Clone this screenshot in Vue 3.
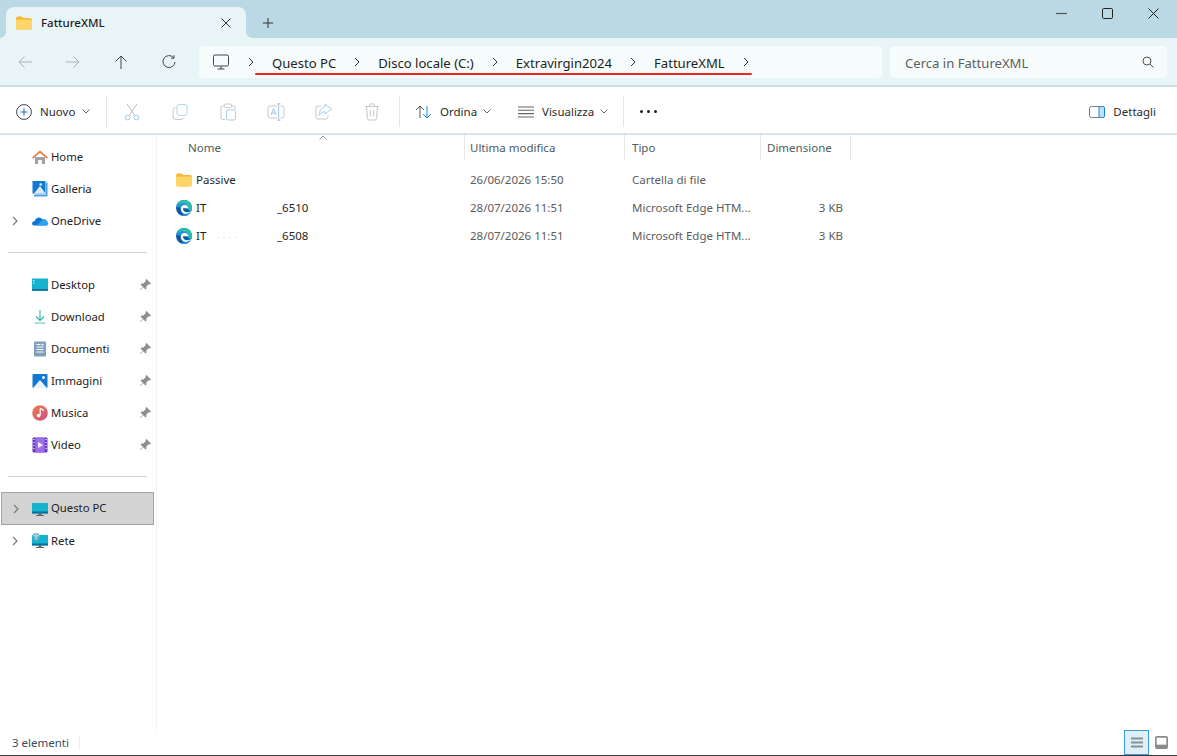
<script setup>
// Windows 11 File Explorer window, folder view. Sidebar icons are small svg strings.
const folder = '<path d="M0 3.5Q0 1.5 2 1.5H5.5L7.5 3H14Q16 3 16 5V12.5Q16 14.5 14 14.5H2Q0 14.5 0 12.5Z" fill="#f7b733"/><path d="M0 6Q0 4.6 2 4.6H14Q16 4.6 16 6V12.5Q16 14.5 14 14.5H2Q0 14.5 0 12.5Z" fill="#fdd569"/>'
const edge = '<circle cx="8" cy="8" r="8" fill="#0d5aa6"/><path d="M.1 7.4C.6 3 4 0 8 0C12.6 0 16 3.6 16 8C16 9.6 15.6 10.6 14.6 11.2L9 7C6 5 2.6 5.4 .1 7.4Z" fill="#2bbfb0"/><path d="M.1 7.4C1 4.6 4 3 7.4 3.4C10.6 3.8 12.4 5.800 12.2 8H6.6C6.2 10.4 8.4 12.2 11 12.200C12.600 12.200 13.800 11.800 15 11C13.800 14 11.200 16 8 16C7.400 16 6.800 15.900 6.200 15.800C9 15 4 10 5 8C4 7 2 7 .1 7.400Z" fill="#2a8fd6"/><path d="M4.800 9C4.800 6.400 6.600 5 8.600 5C10.800 5 12.200 6.400 12.200 8.200H7C6.800 10.600 8.800 12.300 11 12.300C12.400 12.300 13.800 11.900 15 11C14 12.800 12.200 13.800 10.200 13.800C7 13.800 4.800 11.800 4.800 9Z" fill="#fff"/>'
const pc = '<rect x="0" y="2" width="16" height="10.5" rx=".8" fill="#14b3d0"/><rect x="0" y="10.5" width="16" height="2" fill="#0c6f95"/><rect x="6.5" y="12.5" width="3" height="1.8" fill="#4f6673"/><rect x="4" y="14" width="8" height="1" fill="#4f6673"/>'
const picture = '<rect x=".5" y="1" width="15" height="14" rx="1" fill="#1178d4"/><path d="M1 15L8 7L15 15Z" fill="#e8f3fb"/><circle cx="11.5" cy="4.5" r="1.5" fill="#fff"/>'

const quick = [
  { label: 'Home', icon: '<path d="M3 8H13V15H9.8V11H6.2V15H3Z" fill="#a2a2a2"/><path d="M0 8.6L8 1.5L16 8.6L14.8 9.6L8 3.8L1.2 9.6Z" fill="#e8743b"/>' },
  { label: 'Galleria', icon: '<rect x=".5" y="0" width="13" height="12.5" fill="#1178d4"/><path d="M2 12.5L8 5L13.5 12.5Z" fill="#dbeaf6"/><circle cx="8.7" cy="3.4" r="1.2" fill="#fff"/><path d="M14 1.5H15.5V15.5H2V14H14Z" fill="#4c9edc"/><rect x="2" y="12.5" width="12" height="1.5" fill="#a9cde9"/>' },
  { label: 'OneDrive', arrow: true, icon: '<path d="M1.500 12.500Q-.5 12 .3 9.600Q1 8 2.600 8.300Q3.400 5 6.600 4.600Q9 4.400 10.400 6.400Q14 5.800 15 8.600Q16.400 9.400 16 11Q15.400 12.500 14 12.500Z" fill="#0f78d4"/><path d="M5 12.500L10.400 6.400Q14 5.800 15 8.600Q16.400 9.400 16 11Q15.400 12.500 14 12.500Z" fill="#2ea2ec"/>' },
]
const pinned = [
  { label: 'Desktop', icon: '<rect x="0" y="1.5" width="16" height="12" rx=".6" fill="#14b3d0"/><rect x="0" y="12" width="16" height="1.8" fill="#0c6f95"/><rect x="1.2" y="3" width="1.2" height="1.2" fill="#e3f7fb"/><rect x="1.2" y="5.4" width="1.2" height="1.2" fill="#e3f7fb"/>' },
  { label: 'Download', icon: '<path d="M8 1V11M4 7.5L8 11.5L12 7.5" fill="none" stroke="#35b4a0" stroke-width="1.1"/><rect x="2.5" y="13.5" width="11" height="1.2" fill="#6fd0c0"/>' },
  { label: 'Documenti', icon: '<rect x="2" y="0.5" width="12" height="15" rx=".8" fill="#7f9fbd"/><path d="M4.5 3.5H8.5M4.5 6H11.5M4.5 8.5H11.5M4.5 11H11.5" stroke="#fff" stroke-width="1.2"/><rect x="9.5" y="2.8" width="2" height="1.6" fill="#fff"/>' },
  { label: 'Immagini', icon: picture },
  { label: 'Musica', icon: '<defs><linearGradient id="mus" x1="0" y1="0" x2="1" y2="1"><stop offset="0" stop-color="#ee8047"/><stop offset="1" stop-color="#cc4c8a"/></linearGradient></defs><circle cx="8" cy="8" r="7.8" fill="url(#mus)"/><path d="M8.2 3.5V10.2" stroke="#fff" stroke-width="1.2"/><circle cx="6.600" cy="10.600" r="1.800" fill="#fff"/><path d="M8.200 3.500Q11 3.800 11.400 6" fill="none" stroke="#fff" stroke-width="1.2"/>' },
  { label: 'Video', icon: '<rect x=".5" y=".5" width="15" height="15" rx="1" fill="#6a3cc4"/><rect x="3.4" y=".5" width="9.2" height="15" fill="#9c6fe4"/><path d="M6 5L11 8L6 11Z" fill="#f5efff"/><path d="M1.2 2.5H2.7M1.2 5.5H2.7M1.2 8.5H2.7M1.2 11.5H2.7M13.3 2.5H14.8M13.3 5.5H14.8M13.3 8.5H14.8M13.3 11.5H14.8" stroke="#d9c8f7" stroke-width="1"/>' },
]
const places = [
  { label: 'Questo PC', arrow: true, selected: true, icon: pc },
  { label: 'Rete', arrow: true, icon: pc + '<circle cx="4.2" cy="3.6" r="3.6" fill="#5fb2c9"/><path d="M1.4 2.2Q4 4.4 7 2.2M4.2 0V7.2" stroke="#e4f2f6" stroke-width=".7" fill="none"/>' },
]
const crumbs = ['Questo PC', 'Disco locale (C:)', 'Extravirgin2024', 'FattureXML']
const files = [
  { first: 'Passive', date: '26/06/2026 15:50', type: 'Cartella di file', size: '', icon: folder },
  { first: 'IT', last: '_6510', date: '28/07/2026 11:51', type: 'Microsoft Edge HTM...', size: '3 KB', icon: edge },
  { first: 'IT', last: '_6508', smudge: true, date: '28/07/2026 11:51', type: 'Microsoft Edge HTM...', size: '3 KB', icon: edge },
]
</script>

<template>
  <div class="win">
    <header class="titlebar">
      <div class="tab">
        <svg class="ico16" viewBox="0 0 16 16" v-html="folder"></svg>
        <span class="tab-title">FattureXML</span>
        <svg class="tab-close" viewBox="0 0 10 10"><path d="M.5 .5L9.5 9.5M9.5 .5L.5 9.5" stroke="#333" fill="none" /></svg>
      </div>
      <svg class="tab-plus" viewBox="0 0 10 10"><path d="M5 0V10M0 5H10" stroke="#333" fill="none" /></svg>
      <div class="winbtns">
        <svg viewBox="0 0 11 11"><path d="M0 5.5H11" stroke="#555" stroke-width="1.2" /></svg>
        <svg viewBox="0 0 11 11"><rect x=".5" y=".5" width="10" height="10" rx="1.2" fill="none" stroke="#222" /></svg>
        <svg viewBox="0 0 11 11"><path d="M.5 .5L10.5 10.5M10.5 .5L.5 10.5" stroke="#222" fill="none" /></svg>
      </div>
    </header>

    <nav class="navbar">
      <div class="navbtns">
        <svg viewBox="0 0 14 14"><path d="M14 7H1M6.5 1.5L1 7L6.5 12.5" class="line off" /></svg>
        <svg viewBox="0 0 14 14"><path d="M0 7H13M7.5 1.5L13 7L7.5 12.5" class="line off" /></svg>
        <svg viewBox="0 0 14 14"><path d="M7 14V1M1.5 6.5L7 1L12.5 6.5" class="line" /></svg>
        <svg viewBox="0 0 14 14"><path d="M11.5 2.6A6 6 0 1 0 13 7M12 .2V3.2H9" class="line" /></svg>
      </div>
      <div class="address">
        <svg class="pc-ico" viewBox="0 0 16 16"><rect x=".5" y="1" width="15" height="11" rx="1.5" fill="none" stroke="#444" /><path d="M8 12V15M4.5 15H11.5" stroke="#444" fill="none" /></svg>
        <svg class="chev" viewBox="0 0 6 10"><path d="M1 1L5 5L1 9" fill="none" stroke="#333" /></svg>
        <template v-for="c in crumbs" :key="c">
          <span class="crumb">{{ c }}</span>
          <svg class="chev" viewBox="0 0 6 10"><path d="M1 1L5 5L1 9" fill="none" stroke="#333" /></svg>
        </template>
        <div class="redline"></div>
      </div>
      <div class="search">
        <span>Cerca in FattureXML</span>
        <svg viewBox="0 0 12 12"><circle cx="5" cy="5" r="4" fill="none" stroke="#555" /><path d="M8 8L11.5 11.5" stroke="#555" /></svg>
      </div>
    </nav>

    <div class="cmdbar">
      <div class="cmd new">
        <svg class="ico16" viewBox="0 0 16 16"><circle cx="8" cy="8" r="7.4" fill="none" stroke="#444" /><path d="M8 4.5V11.5M4.5 8H11.5" stroke="#1a73c7" stroke-width="1.1" /></svg>
        <span>Nuovo</span>
        <svg class="caret" viewBox="0 0 8 5"><path d="M.5 .5L4 4L7.5 .5" fill="none" stroke="#666" /></svg>
      </div>
      <i class="vsep"></i>
      <div class="greyed">
        <svg viewBox="0 0 16 18"><path d="M3 1L10.5 12M13 1L5.5 12" stroke="#bdbdbd" fill="none" /><circle cx="3.7" cy="14.5" r="2.4" fill="none" stroke="#9cc6e8" /><circle cx="12.3" cy="14.5" r="2.4" fill="none" stroke="#9cc6e8" /></svg>
        <svg viewBox="0 0 16 18"><rect x="5" y="1.5" width="10" height="11" rx="2.2" fill="none" stroke="#b5d2ea" /><path d="M3.5 4.5Q1 5 1 7.5V13Q1 16.5 4.5 16.5H9Q11 16.5 12 14.5" fill="none" stroke="#c6c6c6" /></svg>
        <svg viewBox="0 0 16 18"><path d="M4 3H2Q1 3 1 4.5V15Q1 16.5 2.5 16.5H5M12 3H14Q15 3 15 4.5V6" fill="none" stroke="#c6c6c6" /><rect x="4.5" y="1" width="7" height="3.5" rx="1" fill="none" stroke="#c6c6c6" /><rect x="6.5" y="7" width="9" height="10" rx="1.5" fill="none" stroke="#a7cdea" /></svg>
        <svg viewBox="0 0 18 18"><path d="M10 3H3Q1 3 1 5V13Q1 15 3 15H10M13.5 3H15Q17 3 17 5V13Q17 15 15 15H13.5" fill="none" stroke="#c6c6c6" /><path d="M11.7 .8V17.2M10 .8H13.5M10 17.2H13.5" stroke="#9cc6e8" fill="none" /><path d="M4 12L6.5 5.5L9 12M4.9 10H8.1" stroke="#9cc6e8" fill="none" /></svg>
        <svg viewBox="0 0 18 18"><path d="M6 3H3Q1 3 1 5V14Q1 16 3 16H11Q13 16 13 14V12.5" fill="none" stroke="#c6c6c6" /><path d="M10 3V1L16.5 6L10 11V8.6Q6 8.4 4 12.5Q4.5 5 10 3.6Z" fill="none" stroke="#a7cdea" /></svg>
        <svg viewBox="0 0 16 18"><path d="M1 3.5H15M5.5 3.5V2Q5.5 1 6.5 1H9.5Q10.5 1 10.5 2V3.5M2.5 3.5L3.5 15.5Q3.6 17 5 17H11Q12.4 17 12.5 15.5L13.5 3.5M6.3 7V13.5M9.7 7V13.5" fill="none" stroke="#c6c6c6" /></svg>
      </div>
      <i class="vsep"></i>
      <div class="cmd sort">
        <svg viewBox="0 0 17 14"><path d="M5 13V1M1 5L5 1L9 5" fill="none" stroke="#555" /><path d="M12 1V13M8 9L12 13L16 9" fill="none" stroke="#1a8ae0" /></svg>
        <span>Ordina</span>
        <svg class="caret" viewBox="0 0 8 5"><path d="M.5 .5L4 4L7.5 .5" fill="none" stroke="#666" /></svg>
      </div>
      <div class="cmd view">
        <svg viewBox="0 0 16 12"><path d="M0 1H16M0 4.3H16M0 7.6H16M0 11H16" stroke="#666" stroke-width="1.1" /></svg>
        <span>Visualizza</span>
        <svg class="caret" viewBox="0 0 8 5"><path d="M.5 .5L4 4L7.5 .5" fill="none" stroke="#666" /></svg>
      </div>
      <i class="vsep"></i>
      <div class="dots"><b></b><b></b><b></b></div>
      <div class="cmd details">
        <svg viewBox="0 0 16 12"><rect x=".5" y=".5" width="15" height="11" rx="2" fill="none" stroke="#7c7c7c" /><rect x="10" y=".5" width="5.5" height="11" rx="1.5" fill="#bfe0f7" stroke="#1a8ae0" /></svg>
        <span>Dettagli</span>
      </div>
    </div>

    <div class="main">
      <aside class="sidebar">
        <div v-for="n in quick" :key="n.label" class="nav-row">
          <svg v-if="n.arrow" class="nav-arrow" viewBox="0 0 6 10"><path d="M1 1L5 5L1 9" fill="none" stroke="#777" stroke-width="1.1" /></svg>
          <svg class="ico16" viewBox="0 0 16 16" v-html="n.icon"></svg>
          <span>{{ n.label }}</span>
        </div>
        <hr class="nav-sep" />
        <div v-for="n in pinned" :key="n.label" class="nav-row">
          <svg class="ico16" viewBox="0 0 16 16" v-html="n.icon"></svg>
          <span>{{ n.label }}</span>
          <svg class="pin" viewBox="0 0 12 12"><path d="M7 0L12 5L11 6L9.5 5.8L7 8.3L7 10.5L6 11.5L.5 6L1.5 5L3.7 5L6.2 2.500L6 1Z" fill="#8f8f8f" /><path d="M3 9L.5 11.5" stroke="#8f8f8f" /></svg>
        </div>
        <hr class="nav-sep" />
        <div v-for="n in places" :key="n.label" class="nav-row" :class="{ selected: n.selected }">
          <svg class="nav-arrow" viewBox="0 0 6 10"><path d="M1 1L5 5L1 9" fill="none" stroke="#777" stroke-width="1.1" /></svg>
          <svg class="ico16" viewBox="0 0 16 16" v-html="n.icon"></svg>
          <span>{{ n.label }}</span>
        </div>
      </aside>

      <section class="list">
        <div class="list-head">
          <svg class="sort-caret" viewBox="0 0 8 5"><path d="M.5 4.5L4 1L7.5 4.5" fill="none" stroke="#999" /></svg>
          <div class="c-name">Nome</div>
          <div class="c-date">Ultima modifica</div>
          <div class="c-type">Tipo</div>
          <div class="c-size">Dimensione</div>
        </div>
        <div v-for="f in files" :key="f.first + f.last" class="list-row">
          <div class="r-name">
            <svg class="ico16" viewBox="0 0 16 16" v-html="f.icon"></svg>
            <span class="fn">{{ f.first }}</span>
            <i v-if="f.smudge" class="smudge"></i>
            <span v-if="f.last" class="fn-last">{{ f.last }}</span>
          </div>
          <div class="r-date">{{ f.date }}</div>
          <div class="r-type">{{ f.type }}</div>
          <div class="r-size">{{ f.size }}</div>
        </div>
      </section>
    </div>

    <footer class="status">
      <span>3 elementi</span>
      <i class="status-sep"></i>
      <div class="viewbtn active">
        <svg viewBox="0 0 12 11"><path d="M0 1.5H12M0 5.5H12M0 9.5H12" stroke="#8a8f94" stroke-width="2" /></svg>
      </div>
      <div class="viewbtn">
        <svg viewBox="0 0 12 12"><rect x=".75" y=".75" width="10.5" height="10.5" rx="1" fill="none" stroke="#8a8a8a" stroke-width="1.5" /><rect x="1" y="8" width="10" height="3.5" fill="#8a8a8a" /></svg>
      </div>
    </footer>
  </div>
</template>

<style>
html,
body {
  margin: 0;
  background: #fff;
}
</style>

<style scoped>
.win {
  width: 1177px;
  height: 756px;
  display: flex;
  flex-direction: column;
  overflow: hidden;
  font-family: "Noto Sans", "Open Sans", sans-serif;
  font-size: 11.5px;
  color: #1f1f1f;
  background: #fff;
}
.ico16 {
  width: 16px;
  height: 16px;
  flex: none;
}

.titlebar {
  height: 38px;
  flex: none;
  display: flex;
  align-items: flex-end;
  background: #bbd9e5;
  padding-left: 6px;
}
.tab {
  position: relative;
  width: 240px;
  height: 31px;
  box-sizing: border-box;
  padding: 0 15px 0 10px;
  display: flex;
  align-items: center;
  background: #e9f4f7;
  border-radius: 8px 8px 0 0;
}
.tab::before,
.tab::after {
  content: "";
  position: absolute;
  bottom: 0;
  width: 6px;
  height: 6px;
}
.tab::before {
  left: -6px;
  background: radial-gradient(circle at 0 0, #bbd9e5 5.5px, #e9f4f7 6px);
}
.tab::after {
  right: -6px;
  background: radial-gradient(circle at 100% 0, #bbd9e5 5.5px, #e9f4f7 6px);
}
.tab-title {
  margin-left: 9px;
  flex: 1;
  font-size: 11.5px;
  font-weight: 500;
}
.tab-close {
  width: 10px;
  height: 10px;
}
.tab-plus {
  width: 10px;
  height: 10px;
  margin: 0 0 10px 17px;
}
.winbtns {
  margin-left: auto;
  align-self: flex-start;
  display: flex;
  gap: 35px;
  padding: 8px 18px 0 0;
}
.winbtns svg {
  width: 11px;
  height: 11px;
}

.navbar {
  height: 49px;
  flex: none;
  box-sizing: border-box;
  display: flex;
  align-items: flex-start;
  padding: 8px 10px 0 0;
  background: #e9f4f7;
  border-bottom: 2px solid #c6dde6;
}
.navbtns {
  width: 199px;
  height: 32px;
  flex: none;
  box-sizing: border-box;
  padding-left: 18px;
  display: flex;
  align-items: center;
  gap: 34px;
}
.navbtns svg {
  width: 14px;
  height: 14px;
}
.line {
  fill: none;
  stroke: #444;
}
.line.off {
  stroke: #a9b4b9;
}
.address {
  position: relative;
  width: 683px;
  height: 32px;
  flex: none;
  box-sizing: border-box;
  padding-left: 14px;
  display: flex;
  align-items: center;
  gap: 18px;
  background: #f6fbfc;
  border-radius: 4px;
  font-size: 13.1px;
}
.pc-ico {
  width: 16px;
  height: 16px;
  margin-right: 1px;
}
.chev {
  width: 6px;
  height: 10px;
  flex: none;
}
.crumb {
  white-space: nowrap;
  padding-top: 1px;
}
.redline {
  position: absolute;
  left: 56px;
  top: 27px;
  width: 497px;
  height: 2px;
  border-radius: 1px;
  background: #ea2a22;
}
.search {
  width: 277px;
  height: 32px;
  flex: none;
  margin-left: 8px;
  box-sizing: border-box;
  padding: 0 13px 0 15px;
  display: flex;
  align-items: center;
  justify-content: space-between;
  background: #f6fbfc;
  border-radius: 4px;
  font-size: 13.1px;
  color: #5d5d5d;
}
.search span {
  padding-top: 1px;
}
.search svg {
  width: 12px;
  height: 12px;
}

.cmdbar {
  height: 48px;
  flex: none;
  box-sizing: border-box;
  padding-top: 3px;
  display: flex;
  align-items: center;
  background: #fff;
  border-bottom: 2px solid #d8e5eb;
}
.cmd {
  display: flex;
  align-items: center;
  color: #2b2b2b;
}
.caret {
  width: 8px;
  height: 5px;
}
.vsep {
  width: 1px;
  height: 31px;
  flex: none;
  background: #e4e4e4;
}
.new {
  width: 106px;
  flex: none;
  box-sizing: border-box;
  padding-left: 16px;
}
.new span {
  margin: 0 7px 0 8px;
}
.greyed {
  width: 292px;
  flex: none;
  box-sizing: border-box;
  padding-left: 1px;
  display: grid;
  grid-template-columns: repeat(6, 48px);
  justify-items: center;
  align-items: center;
}
.greyed svg {
  width: 18px;
  height: 18px;
}
.sort {
  width: 103px;
  flex: none;
  box-sizing: border-box;
  padding-left: 15px;
}
.sort svg:first-child {
  width: 17px;
  height: 14px;
}
.sort span {
  margin: 0 6px 0 8px;
}
.view {
  width: 120px;
  flex: none;
  box-sizing: border-box;
  padding-left: 15px;
}
.view svg:first-child {
  width: 16px;
  height: 12px;
}
.view span {
  margin: 0 6px 0 8px;
}
.dots {
  margin-left: 16px;
  display: flex;
  gap: 4px;
}
.dots b {
  width: 3px;
  height: 3px;
  border-radius: 50%;
  background: #222;
}
.details {
  margin-left: auto;
  padding-right: 21px;
}
.details svg {
  width: 16px;
  height: 12px;
  margin-right: 8px;
}

.main {
  flex: 1;
  min-height: 0;
  display: flex;
}
.sidebar {
  width: 157px;
  flex: none;
  box-sizing: border-box;
  padding-top: 6px;
  border-right: 1px solid #f3f3f3;
}
.nav-row {
  position: relative;
  height: 32px;
  box-sizing: border-box;
  padding-left: 32px;
  display: flex;
  align-items: center;
  gap: 3px;
  color: #222;
  font-size: 11.3px;
}
.nav-row span {
  margin-bottom: 2px;
}
.nav-row.selected {
  margin: -1px 2px 0 1px;
  height: 33px;
  padding-left: 30px;
  background: #d3d3d3;
  border: 1px solid #a3a3a3;
}
.nav-row.selected .nav-arrow {
  left: 11px;
}
.nav-arrow {
  position: absolute;
  left: 12px;
  top: 11px;
  width: 6px;
  height: 10px;
}
.pin {
  position: absolute;
  left: 140px;
  top: 10px;
  width: 11px;
  height: 11px;
}
.nav-sep {
  margin: 15px 9px 16px 8px;
  height: 1px;
  border: 0;
  background: #d0d0d0;
}

.list {
  flex: 1;
  min-width: 0;
}
.list-head,
.list-row {
  display: grid;
  grid-template-columns: 308px 160px 136px 90px;
  width: 694px;
  align-items: center;
}
.list-head {
  position: relative;
  height: 25px;
  margin-bottom: 6px;
  color: #4c5a63;
}
.list-head > div {
  height: 25px;
  line-height: 26px;
  box-sizing: border-box;
  border-right: 1px solid #e5e5e5;
}
.sort-caret {
  position: absolute;
  left: 162px;
  top: 0;
  width: 8px;
  height: 5px;
}
.c-name {
  padding-left: 31px;
}
.c-date {
  padding-left: 5px;
}
.c-type {
  padding-left: 7px;
}
.c-size {
  padding-left: 6px;
}
.list-row {
  height: 28px;
  color: #5c5c5c;
}
.list-row > div {
  padding-bottom: 2px;
}
.r-name {
  position: relative;
  padding-left: 19px;
  display: flex;
  align-items: center;
  color: #1f1f1f;
}
.r-name .ico16 {
  margin-bottom: -2px;
}
.fn {
  margin-left: 4px;
}
.fn-last {
  position: absolute;
  left: 120px;
}
.smudge {
  position: absolute;
  left: 60px;
  top: 9px;
  width: 20px;
  height: 1px;
  background: repeating-linear-gradient(90deg, #e6e6e6 0 2px, #fff 2px 6px);
}
.r-date {
  padding-left: 5px;
}
.r-type {
  padding-left: 7px;
}
.r-size {
  padding-right: 8px;
  text-align: right;
}

.status {
  height: 26px;
  flex: none;
  box-sizing: border-box;
  padding-left: 12px;
  display: flex;
  align-items: center;
  background: #fff;
  border-bottom: 1px solid #3a3a3a;
  color: #3a4a5c;
}
.status-sep {
  width: 1px;
  height: 14px;
  margin-left: 10px;
  background: #ececec;
}
.viewbtn {
  display: flex;
  align-items: center;
  justify-content: center;
}
.viewbtn.active {
  width: 25px;
  height: 25px;
  box-sizing: border-box;
  margin: 0 6px 0 auto;
  background: #dff0fb;
  border: 1px solid #3b9bd6;
}
.viewbtn.active svg {
  width: 12px;
  height: 11px;
}
.viewbtn:not(.active) {
  margin-right: 9px;
}
.viewbtn:not(.active) svg {
  width: 13px;
  height: 13px;
}
</style>
